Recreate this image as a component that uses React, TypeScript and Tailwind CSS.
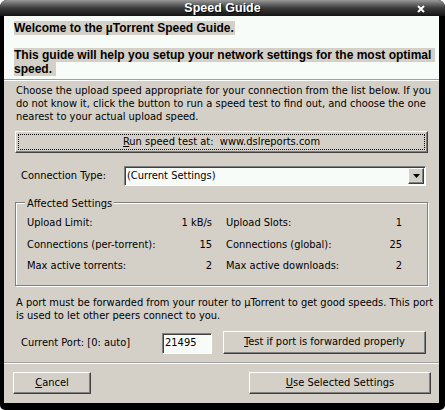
import React from "react"

const raised =
  "border border-t-white border-l-white border-r-[#404040] border-b-[#404040] shadow-[inset_-1px_-1px_0_#808080] bg-[#d4d0c8]"
const sunken =
  "border border-t-[#808080] border-l-[#808080] border-r-white border-b-white shadow-[inset_1px_1px_0_#404040] bg-[#f8fcf8]"

function Row({ label, value }: { label: string; value: string }) {
  return (
    <div className="flex justify-between leading-[21.5px]">
      <span>{label}</span>
      <span>{value}</span>
    </div>
  )
}

export default function App() {
  return (
    <div className="h-[410px] w-[445px] bg-white font-['DejaVu_Sans_Condensed','Liberation_Sans',sans-serif] text-[11px] text-black">
      <div className="flex h-full flex-col overflow-hidden rounded-t-[7px] rounded-b-[5px] bg-black">
        {/* Title bar */}
        <div className="relative flex h-[16px] shrink-0 items-center justify-center bg-gradient-to-b from-[#9a9a9a] via-[#3c3c3c] to-[#151515]">
          <span className="font-['Liberation_Sans',sans-serif] text-[12.5px] font-bold leading-none text-white [text-shadow:1px_1px_0_#000]">
            Speed Guide
          </span>
          <svg className="absolute right-[20px] top-[5px]" width="8" height="8" viewBox="0 0 8 8">
            <path d="M1 1 L7 7 M7 1 L1 7" stroke="#fff" strokeWidth="2" />
          </svg>
        </div>

        <div className="mb-[7px] ml-[4px] mr-[6px] flex flex-1 flex-col bg-[#d4d0c8]">
          {/* Header */}
          <div className="h-[64px] shrink-0 overflow-hidden whitespace-nowrap border-b border-[#a0a0a0] bg-[#f8fcf8] pl-[10px] pt-[6px] font-['Liberation_Sans',sans-serif] text-[12px] font-bold leading-[13.5px]">
            <span className="bg-[#d4d0c8] pr-[1px]">Welcome to the µTorrent Speed Guide.</span>
            <br />
            <br />
            <span className="bg-[#d4d0c8] pr-[4px] [box-decoration-break:clone]">
              This guide will help you setup your network settings for the most optimal
              <br />
              speed.
            </span>
          </div>

          {/* Body */}
          <div className="border-t border-white px-[11px] pt-[3px]">
            <p className="whitespace-nowrap pl-[1px] leading-[13px]">
              Choose the upload speed appropriate for your connection from the list below. If you
              <br />
              do not know it, click the button to run a speed test to find out, and choose the one
              <br />
              nearest to your actual upload speed.
            </p>

            <button
              className={`${raised} mt-[8px] flex h-[22px] w-full items-center justify-center outline-1 -outline-offset-4 outline-dotted outline-black`}
            >
              <span>
                <u>R</u>un speed test at:&nbsp; www.dslreports.com
              </span>
            </button>

            <div className="mt-[13px] flex h-[20px] items-center">
              <span className="w-[109px] pl-[6px]">Connection Type:</span>
              <div className={`${sunken} flex h-[20px] w-[302px] items-center justify-between`}>
                <span className="pl-[2px]">(Current Settings)</span>
                <div className={`${raised} mr-[1px] flex h-[16px] w-[16px] items-center justify-center`}>
                  <svg width="7" height="4" viewBox="0 0 7 4">
                    <path d="M0 0 H7 L3.5 4 Z" fill="#000" />
                  </svg>
                </div>
              </div>
            </div>

            {/* Affected settings group */}
            <div className="relative mt-[16px] h-[84px] border border-[#808080] shadow-[1px_1px_0_#fff,inset_1px_1px_0_#fff] pl-[11px] pt-[9px]">
              <span className="absolute left-[9px] top-0 -translate-y-1/2 bg-[#d4d0c8] px-[2px] leading-[13px]">
                Affected Settings
              </span>
              <div className="grid grid-cols-[185px_176px] gap-x-[14px]">
                <Row label="Upload Limit:" value="1 kB/s" />
                <Row label="Upload Slots:" value="1" />
                <Row label="Connections (per-torrent):" value="15" />
                <Row label="Connections (global):" value="25" />
                <Row label="Max active torrents:" value="2" />
                <Row label="Max active downloads:" value="2" />
              </div>
            </div>

            <p className="mt-[10px] whitespace-nowrap pl-[1px] leading-[13px]">
              A port must be forwarded from your router to µTorrent to get good speeds. This port
              <br />
              is used to let other peers connect to you.
            </p>

            <div className="mt-[9px] flex h-[23px] items-end">
              <span className="w-[147px] self-center pl-[6px] pt-[2px]">Current Port: [0: auto]</span>
              <div className={`${sunken} flex h-[21px] w-[50px] items-center pl-[2px]`}>21495</div>
              <button className={`${raised} ml-[11px] flex h-[23px] w-[203px] items-center justify-center`}>
                <span>
                  <u>T</u>est if port is forwarded properly
                </span>
              </button>
            </div>
          </div>

          {/* Footer */}
          <div className="mt-[8px] border-t border-[#a0a0a0]">
            <div className="flex justify-between border-t border-white px-[8px] pl-[9px] pt-[8px]">
              <button className={`${raised} flex h-[22px] w-[78px] items-center justify-center`}>
                <span>
                  <u>C</u>ancel
                </span>
              </button>
              <button className={`${raised} flex h-[22px] w-[182px] items-center justify-center`}>
                <span>
                  <u>U</u>se Selected Settings
                </span>
              </button>
            </div>
          </div>
        </div>
      </div>
    </div>
  )
}
